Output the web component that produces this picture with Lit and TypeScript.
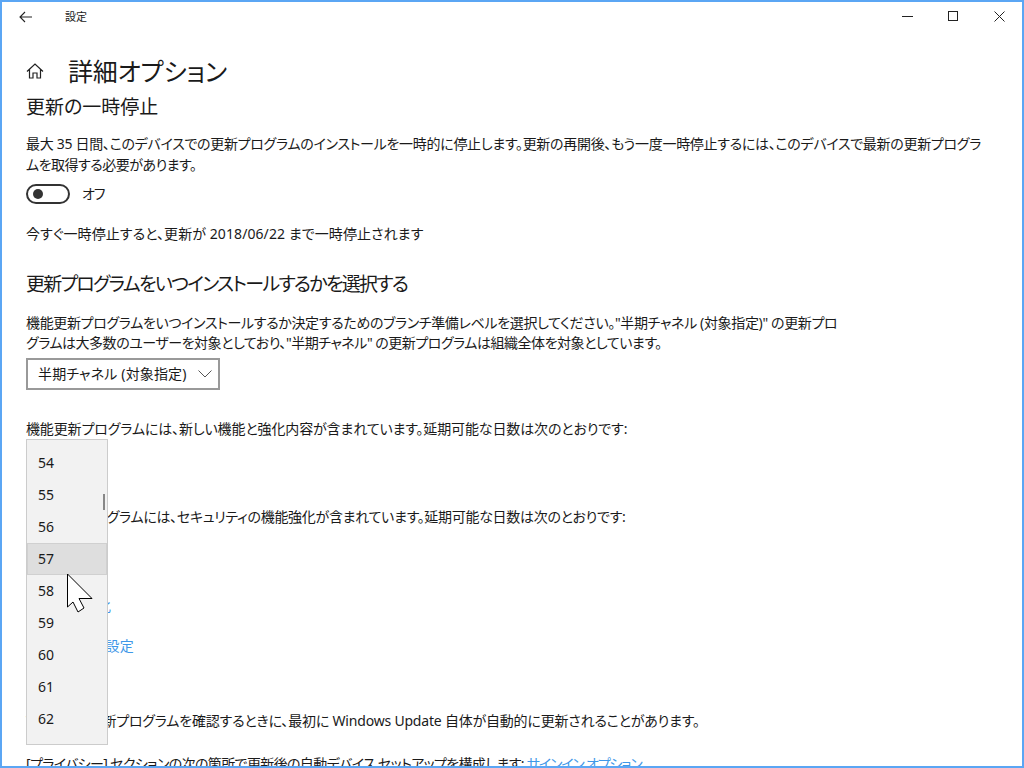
import { LitElement, html, css, unsafeCSS } from 'lit';
import { customElement, state } from 'lit/decorators.js';

const FONT_STACK = unsafeCSS(`"Noto Sans", "Noto Sans CJK JP", sans-serif`);

@customElement('app-root')
export class AppRoot extends LitElement {
    static styles = css`
        :host {
            display: block;
            width: 1024px;
            height: 768px;
            overflow: hidden;
            background: #fff;
        }

        .window {
            position: relative;
            box-sizing: border-box;
            width: 1024px;
            height: 768px;
            border: 2px solid #5ba6f4;
            overflow: hidden;
            background: #fff;
            color: #1a1a1a;
            font-family: ${FONT_STACK};
            font-size: 14px;
            font-feature-settings: "palt";
            line-height: 20px;
            white-space: nowrap;
        }

        .titlebar {
            display: flex;
            align-items: center;
            height: 29px;
        }
        .back {
            display: flex;
            width: 48px;
            justify-content: center;
        }
        .app-name {
            margin-left: 15px;
            font-size: 11px;
        }
        .controls {
            display: flex;
            margin-left: auto;
        }
        .controls span {
            display: flex;
            width: 46px;
            justify-content: center;
        }

        .content {
            padding: 0 24px;
        }

        .page-title {
            display: flex;
            align-items: center;
            margin-top: 21px;
            height: 38px;
        }
        .page-title svg {
            margin-right: 24px;
        }
        .page-title h1 {
            margin: 0;
            font-size: 25px;
            font-weight: 400;
            line-height: 38px;
            letter-spacing: -0.15px;
        }

        h2 {
            margin: 0;
            font-size: 19px;
            font-weight: 400;
            line-height: 28px;
        }
        .pause-heading { margin-top: 3px; }
        .pause-text { margin: 12px 0 0; line-height: 21px; }
        .pause-a { letter-spacing: -0.29px; }
        .pause-b { letter-spacing: -0.5px; }

        .toggle-row {
            display: flex;
            align-items: center;
            margin-top: 8px;
            height: 22px;
            gap: 12px;
        }
        .toggle {
            box-sizing: border-box;
            display: flex;
            align-items: center;
            width: 44px;
            height: 20px;
            padding-left: 5px;
            border: 2px solid #333;
            border-radius: 10px;
        }
        .toggle i {
            width: 10px;
            height: 10px;
            border-radius: 50%;
            background: #333;
        }
        .toggle-label { letter-spacing: -1px; }

        .until { margin: 19px 0 0; letter-spacing: 0.08px; }
        .channel-heading { margin-top: 26px; letter-spacing: -1.7px; }
        .channel-text { margin: 15px 0 0; }
        .channel-a { letter-spacing: -0.35px; }
        .channel-b { letter-spacing: -0.48px; }

        .select {
            box-sizing: border-box;
            display: flex;
            align-items: center;
            justify-content: space-between;
            width: 194px;
            height: 32px;
            margin-top: 5px;
            padding: 0 6px 0 10px;
            border: 2px solid #999;
        }
        .select span { letter-spacing: 0.15px; }

        .line { margin: 0; }
        .feature-line { margin-top: 29px; letter-spacing: -0.13px; }
        .quality-line { margin-top: 68px; letter-spacing: -0.3px; }
        .link { color: #3f98e8; }
        .optimize-line { margin-top: 69px; letter-spacing: 0.3px; }
        .privacy-line { margin-top: 20px; letter-spacing: 0.4px; }
        .note-line { margin-top: 55px; letter-spacing: -0.2px; }
        .note-lead { letter-spacing: -1.5px; }
        .signin-line { margin-top: 23px; letter-spacing: -0.63px; }
        .signin-line .link { letter-spacing: -1.2px; }

        .flyout {
            position: absolute;
            left: 24px;
            top: 437px;
            box-sizing: border-box;
            width: 82px;
            height: 306px;
            padding-top: 7px;
            background: #f2f2f2;
            border: 1px solid #ccc;
        }
        .flyout div {
            box-sizing: border-box;
            height: 32px;
            padding-left: 11px;
            line-height: 32px;
        }
        .flyout .hot {
            background: #dedede;
            box-shadow: inset 0 0 0 1px #d0d0d0;
        }
        .thumb {
            position: absolute;
            right: 2px;
            top: 54px;
            width: 2px;
            height: 16px;
            background: #888;
        }
        .cursor {
            position: absolute;
            left: 65px;
            top: 571px;
        }
    `;

    @state() minutes = [54, 55, 56, 57, 58, 59, 60, 61, 62];

    render() {
        return html`
            <div class="window">
                <div class="titlebar">
                    <span class="back">
                        <svg width="14" height="12" viewBox="0 0 14 12" fill="none" stroke="#222" stroke-width="1.1">
                            <path d="M13 6H1M6 1 1 6l5 5" />
                        </svg>
                    </span>
                    <span class="app-name">設定</span>
                    <div class="controls">
                        <span><svg width="11" height="11" fill="none" stroke="#222"><path d="M0 5.5h11" /></svg></span>
                        <span><svg width="11" height="11" fill="none" stroke="#222"><rect x=".5" y=".5" width="9" height="9" /></svg></span>
                        <span><svg width="11" height="11" fill="none" stroke="#222"><path d="M.5.5l10 10M10.5.5l-10 10" /></svg></span>
                    </div>
                </div>

                <div class="content">
                    <div class="page-title">
                        <svg width="18" height="18" viewBox="0 0 18 18" fill="none" stroke="#222" stroke-width="1.2">
                            <path d="M1 9.5 9 2l8 7.5M3.5 7.500V16H7v-5h4v5h3.500V7.500" />
                        </svg>
                        <h1>詳細オプション</h1>
                    </div>
                    <h2 class="pause-heading">更新の一時停止</h2>
                    <p class="pause-text">
                        <span class="pause-a">最大 35 日間、このデバイスでの更新プログラムのインストールを一時的に停止します。更新の再開後、もう一度一時停止するには、このデバイスで最新の更新プログラ</span><br /><span class="pause-b">ムを取得する必要があります。</span>
                    </p>
                    <div class="toggle-row">
                        <span class="toggle"><i></i></span>
                        <span class="toggle-label">オフ</span>
                    </div>
                    <p class="until">今すぐ一時停止すると、更新が 2018/06/22 まで一時停止されます</p>

                    <h2 class="channel-heading">更新プログラムをいつインストールするかを選択する</h2>
                    <p class="channel-text">
                        <span class="channel-a">機能更新プログラムをいつインストールするか決定するためのブランチ準備レベルを選択してください。"半期チャネル (対象指定)" の更新プロ</span><br /><span class="channel-b">グラムは大多数のユーザーを対象としており、"半期チャネル" の更新プログラムは組織全体を対象としています。</span>
                    </p>
                    <div class="select">
                        <span>半期チャネル (対象指定)</span>
                        <svg width="14" height="8" fill="none" stroke="#555"><path d="M.5.5 7 7l6.500-6.500" /></svg>
                    </div>

                    <p class="line feature-line">機能更新プログラムには、新しい機能と強化内容が含まれています。延期可能な日数は次のとおりです:</p>
                    <p class="line quality-line">品質更新プログラムには、セキュリティの機能強化が含まれています。延期可能な日数は次のとおりです:</p>
                    <p class="line optimize-line link">配信の最適化</p>
                    <p class="line privacy-line link">プライバシー設定</p>
                    <p class="line note-line"><span class="note-lead">Windows は更</span>新プログラムを確認するときに、最初に Windows Update 自体が自動的に更新されることがあります。</p>
                    <p class="line signin-line">[プライバシー] セクションの次の箇所で更新後の自動デバイス セットアップを構成します: <span class="link">サインイン オプション</span></p>
                </div>

                <div class="flyout">
                    ${this.minutes.map((n) => html`<div class="${n === 57 ? 'hot' : ''}">${n}</div>`)}
                    <span class="thumb"></span>
                </div>
                <svg class="cursor" width="28" height="42" viewBox="0 0 28 42">
                    <path d="M.5 1V34l5.500-5 5 10 6-4-5-9.500H25Z" fill="#fff" stroke="#000" />
                </svg>
            </div>
        `;
    }
}
